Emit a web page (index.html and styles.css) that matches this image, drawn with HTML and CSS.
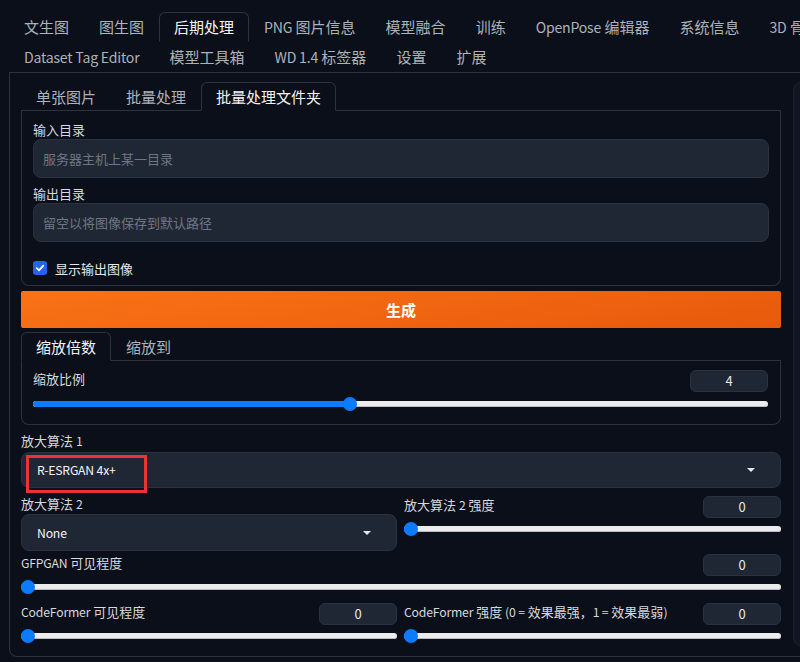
FILE: index.html
```html
<!DOCTYPE html>
<html lang="zh-CN">
<head>
	<meta charset="UTF-8">
	<title>Stable Diffusion</title>
	<link rel="stylesheet" href="styles.css">
</head>
<body>
	<div class="app">
		<div class="tab-nav top-nav">
			<button class="tab">文生图</button>
			<button class="tab">图生图</button>
			<button class="tab selected">后期处理</button>
			<button class="tab"><span class="lat">PNG</span> 图片信息</button>
			<button class="tab">模型融合</button>
			<button class="tab">训练</button>
			<button class="tab"><span class="lat">OpenPose</span> 编辑器</button>
			<button class="tab">系统信息</button>
			<button class="tab"><span class="lat">3D</span> 骨骼模型编辑 <span class="lat">(3D Openpose)</span></button>
			<div class="tab-break"></div>
			<button class="tab"><span class="lat">Dataset Tag Editor</span></button>
			<button class="tab">模型工具箱</button>
			<button class="tab"><span class="lat">WD 1.4</span> 标签器</button>
			<button class="tab">设置</button>
			<button class="tab">扩展</button>
		</div>

		<div class="tabitem outer">
			<div class="columns">
				<div class="left-col">
					<div class="tab-nav sub-nav">
						<button class="tab">单张图片</button>
						<button class="tab">批量处理</button>
						<button class="tab selected">批量处理文件夹</button>
					</div>
					<div class="tabitem inner">
						<div class="label">输入目录</div>
						<div class="textbox placeholder">服务器主机上某一目录</div>
						<div class="label gap-top">输出目录</div>
						<div class="textbox placeholder">留空以将图像保存到默认路径</div>
						<div class="check-row">
							<span class="checkbox">
								<svg width="10" height="10" viewBox="0 0 10 10"><path d="M1.8 5.2 L4 7.3 L8.3 2.7" fill="none" stroke="#fff" stroke-width="1.8" stroke-linecap="round" stroke-linejoin="round"/></svg>
							</span>
							<span class="check-label">显示输出图像</span>
						</div>
					</div>

					<button class="generate">生成</button>

					<div class="tab-nav sub-nav scale-nav">
						<button class="tab selected">缩放倍数</button>
						<button class="tab">缩放到</button>
					</div>
					<div class="tabitem scale-panel">
						<div class="slider">
							<div class="slider-head">
								<span class="label">缩放比例</span>
								<span class="num">4</span>
							</div>
							<div class="range range-lg">
								<div class="track" style="--p:0.43"><div class="fill"></div><div class="thumb"></div></div>
							</div>
						</div>
					</div>

					<div class="label block-top">放大算法 <span class="lat">1</span></div>
					<div class="dropdown">
						<span class="lat">R-ESRGAN 4x+</span>
						<span class="caret"></span>
						<div class="mark"></div>
					</div>

					<div class="pair block-top">
						<div>
							<div class="label">放大算法 <span class="lat">2</span></div>
							<div class="dropdown tall">
								<span class="lat">None</span>
								<span class="caret"></span>
							</div>
						</div>
						<div class="slider shifted">
							<div class="slider-head">
								<span class="label">放大算法 <span class="lat">2</span> 强度</span>
								<span class="num">0</span>
							</div>
							<div class="range">
								<div class="track" style="--p:0"><div class="fill"></div><div class="thumb"></div></div>
							</div>
						</div>
					</div>

					<div class="slider gfpgan">
						<div class="slider-head">
							<span class="label"><span class="lat">GFPGAN</span> 可见程度</span>
							<span class="num">0</span>
						</div>
						<div class="range">
							<div class="track" style="--p:0"><div class="fill"></div><div class="thumb"></div></div>
						</div>
					</div>

					<div class="pair block-top">
						<div class="slider">
							<div class="slider-head">
								<span class="label"><span class="lat">CodeFormer</span> 可见程度</span>
								<span class="num">0</span>
							</div>
							<div class="range">
								<div class="track" style="--p:0"><div class="fill"></div><div class="thumb"></div></div>
							</div>
						</div>
						<div class="slider">
							<div class="slider-head">
								<span class="label"><span class="lat">CodeFormer</span> 强度 <span class="lat">(0 =</span> 效果最强，<span class="lat">1 =</span> 效果最弱<span class="lat">)</span></span>
								<span class="num">0</span>
							</div>
							<div class="range">
								<div class="track" style="--p:0"><div class="fill"></div><div class="thumb"></div></div>
							</div>
						</div>
					</div>
				</div>

				<div class="right-col"></div>
			</div>
		</div>
	</div>
</body>
</html>
```

FILE: styles.css
```css
body{
	margin: 0;
	background: #0b0f19;
	overflow: hidden;
	font-family: "Noto Sans CJK SC", "Noto Sans", sans-serif;
	color: #d6d9de;
}

.app{
	width: 1300px;
	padding-left: 9px;
}

button{
	font: inherit;
	color: inherit;
	background: none;
	cursor: pointer;
}

/* latin runs are set a bit tighter than the cjk ones */
.lat{
	font-size: 0.94em;
	letter-spacing: -0.015em;
}

/* tabs */
.tab-nav{
	display: flex;
	flex-wrap: wrap;
	border-bottom: 1px solid #2b3240;
}

.top-nav{
	padding-top: 12px;
}

.tab-break{
	flex-basis: 100%;
	height: 0;
}

.tab{
	height: 30px;
	box-sizing: border-box;
	padding: 0 14px;
	border: 1px solid transparent;
	border-radius: 6px 6px 0 0;
	font-size: 15px;
	line-height: 28px;
	color: #adb2bb;
	white-space: nowrap;
}

.tab.selected{
	color: #f3f4f6;
	border-color: #2b3240;
	border-bottom-color: transparent;
	background: #0b0f19;
}

.sub-nav .tab{
	height: 29px;
	line-height: 26px;
	margin-bottom: -1px;
}

.sub-nav .tab.selected{
	border-bottom-color: #0b0f19;
}

.tabitem{
	border: 1px solid #2b3240;
	border-top: none;
	border-radius: 0 0 8px 8px;
}

.outer{
	padding: 9px 0 10px 11px;
}

.columns{
	display: flex;
	gap: 12px;
}

.left-col{
	width: 760px;
	flex-shrink: 0;
}

.right-col{
	flex: 1;
	height: 562px;
	background: #111622;
	border: 1px solid #1b2130;
	border-radius: 8px;
}

.inner{
	padding: 9px 11px 3px 11px;
}

.label{
	font-size: 13px;
	line-height: 19px;
	color: #d6d9de;
}

.gap-top{
	margin-top: 6px;
}

.textbox{
	height: 39px;
	box-sizing: border-box;
	background: #1f2735;
	border: 1px solid #2a3242;
	border-radius: 8px;
	padding-left: 9px;
	font-size: 13px;
	line-height: 37px;
}

.placeholder{
	color: #6f7683;
}

.check-row{
	margin-top: 12px;
	height: 28px;
	display: flex;
	align-items: center;
	gap: 8px;
}

.checkbox{
	width: 14px;
	height: 14px;
	border-radius: 3px;
	background: #2563eb;
	display: flex;
	align-items: center;
	justify-content: center;
}

.check-label{
	font-size: 13px;
	color: #e5e7eb;
}

.generate{
	display: block;
	width: 100%;
	height: 37px;
	margin-top: 5px;
	border: none;
	border-radius: 2px;
	background: linear-gradient(170deg, #f97316, #e8590c);
	color: #fff;
	font-size: 15px;
	font-weight: bold;
}

.scale-nav{
	margin-top: 4px;
}

.scale-panel{
	padding: 9px 12px 8px 11px;
}

/* sliders */
.slider-head{
	height: 22px;
	display: flex;
	justify-content: space-between;
	align-items: flex-start;
}

.slider-head .label{
	line-height: 18px;
}

.num{
	width: 78px;
	height: 22px;
	box-sizing: border-box;
	background: #1f2735;
	border: 1px solid #2a3242;
	border-radius: 6px;
	text-align: center;
	font-size: 13px;
	line-height: 20px;
	color: #e5e7eb;
}

.range{
	height: 21px;
	display: flex;
	align-items: center;
}

.range-lg{
	height: 24px;
}

.track{
	position: relative;
	width: 100%;
	height: 6px;
	border-radius: 3px;
	background: #ececec;
	box-shadow: inset 0 -1px 0 #b9bcc2;
}

.fill{
	width: calc((100% - 14px) * var(--p) + 7px);
	height: 100%;
	border-radius: 3px;
	background: #0b7bff;
}

.thumb{
	position: absolute;
	top: 50%;
	left: calc((100% - 14px) * var(--p));
	width: 14px;
	height: 14px;
	margin-top: -7px;
	border-radius: 50%;
	background: #0b7bff;
}

/* dropdowns */
.block-top{
	margin-top: 6px;
}

.dropdown{
	position: relative;
	height: 36px;
	box-sizing: border-box;
	display: flex;
	align-items: center;
	padding: 0 25px 0 15px;
	background: #1f2735;
	border: 1px solid #2a3242;
	border-radius: 8px;
	font-size: 13px;
	color: #f3f4f6;
}

.dropdown.tall{
	height: 37px;
}

.caret{
	margin-left: auto;
	width: 0;
	height: 0;
	border-left: 4px solid transparent;
	border-right: 4px solid transparent;
	border-top: 4px solid #e5e7eb;
}

.mark{
	position: absolute;
	left: 4px;
	top: 2px;
	width: 121px;
	height: 38px;
	box-sizing: border-box;
	border: 3px solid #ec3137;
}

.label + .dropdown{
	margin-top: 1px;
}

.pair{
	display: grid;
	grid-template-columns: 376px 377px;
	gap: 7px;
}

.pair .label + .dropdown{
	margin-top: 0;
}

.shifted{
	margin-top: 2px;
}

.gfpgan{
	margin-top: 3px;
}
```
